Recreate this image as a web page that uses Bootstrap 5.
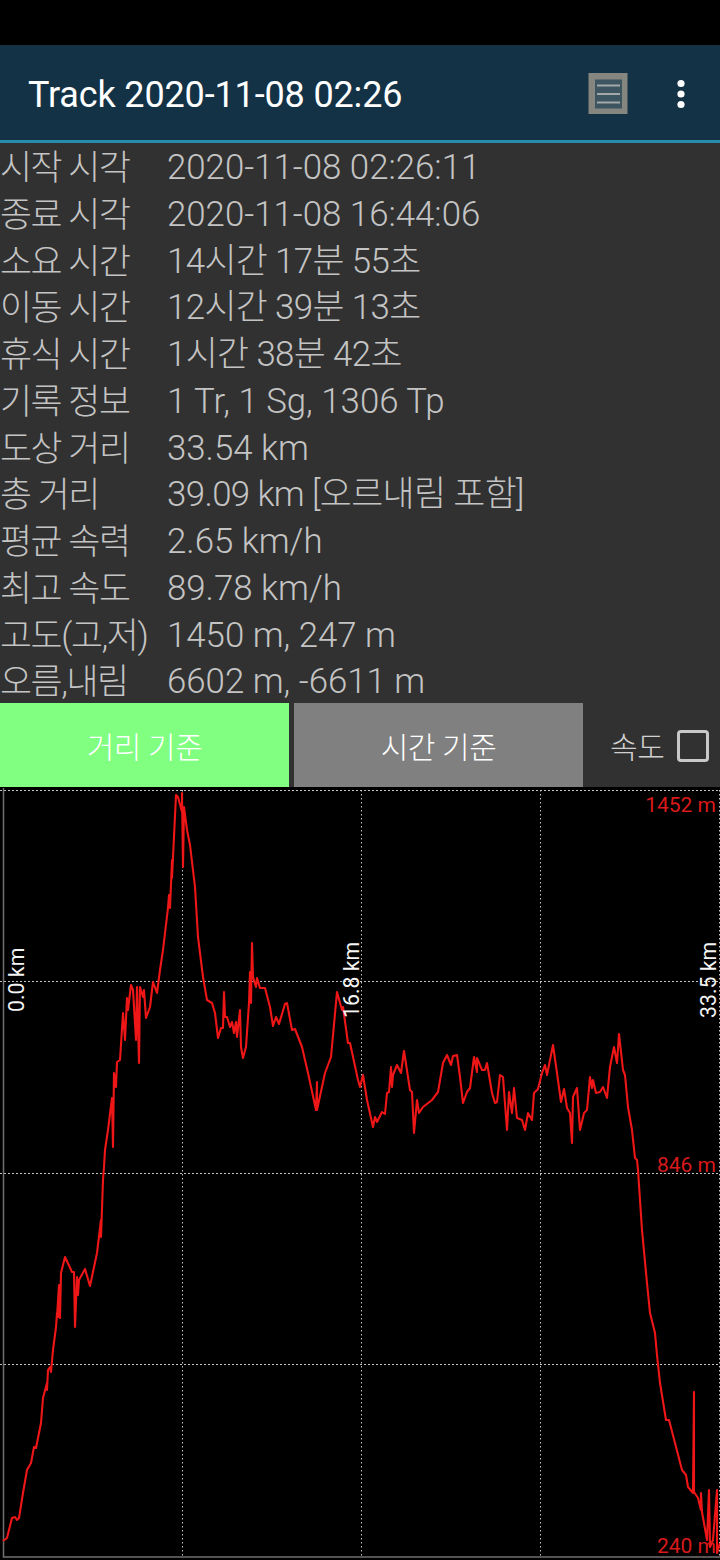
<!doctype html>
<html lang="ko">
<head>
<meta charset="utf-8">
<link href="https://cdn.jsdelivr.net/npm/bootstrap@5.3.0/dist/css/bootstrap.min.css" rel="stylesheet">
<style>
html,body{background:#000;margin:0;height:1560px;overflow:hidden;}
body{font-family:Roboto,"Noto Sans CJK KR",sans-serif;font-weight:300;}
.status-gap{height:45px;background:#000;}
.app-bar{height:98px;background:#143246;border-bottom:3px solid #2a8cac;padding-left:28px;}
.app-title{font-size:36px;line-height:1;color:#fff;font-weight:400;letter-spacing:-.15px;padding-top:4px;}
.doc-icon{width:42px;height:44px;margin-right:32px;}
.kebab{width:40px;margin-right:19px;}
.info-panel{background:#313131;height:560px;color:#c4c4c4;font-size:34.8px;}
.info-line{height:46.75px;line-height:48px;white-space:nowrap;}
.info-key{width:168px;flex:none;letter-spacing:-1.4px;padding-top:1px;}
.info-val{letter-spacing:0;margin-left:-1px;}
.info-mix{letter-spacing:-.6px;}
.tab-row{background:#313131;height:84px;}
.tab-btn{width:289px;height:84px;border:0;border-radius:0;color:#fff;font-size:30px;font-weight:300;padding:5px 0 0;letter-spacing:-.4px;}
.tab-green{background:#80ff80;}
.tab-grey{background:#808080;margin-left:5px;}
.tab-green:hover,.tab-green:active{background:#80ff80 !important;color:#fff !important;}
.tab-grey:hover,.tab-grey:active{background:#808080 !important;color:#fff !important;}
.speed-label{color:#d0d0d0;font-size:30px;margin-left:27px;padding-top:5px;letter-spacing:-.4px;}
.speed-box{width:32px;height:32px;border:3.5px solid #c8c8c8;border-radius:4px;margin-left:13px;margin-top:1px;}
.chart-wrap{height:773px;background:#000;}
.chart-svg{display:block;}
.axis-dist{fill:#f4f4f4;font-size:21.3px;font-family:Roboto,sans-serif;font-weight:400;}
.axis-alt{fill:#d81a1a;font-size:21px;font-family:Roboto,sans-serif;font-weight:400;}
</style>
</head>
<body>
<div class="status-gap"></div>
<div class="app-bar d-flex align-items-center">
  <div class="app-title flex-grow-1">Track 2020-11-08 02:26</div>
  <svg class="doc-icon" viewBox="0 0 42 44" aria-hidden="true">
    <defs><filter id="soft" x="-15%" y="-15%" width="130%" height="130%"><feGaussianBlur stdDeviation=".7"/></filter></defs>
    <g filter="url(#soft)">
      <rect x="1.500" y="2" width="39" height="41" fill="#868680"/>
      <rect x="8" y="8.500" width="27" height="29" fill="#3c5560"/>
      <path d="M10 14.500H33M10 23H33M10 31.500H33" stroke="#a4a8a8" stroke-width="2.200"/>
    </g>
  </svg>
  <svg class="kebab" viewBox="0 0 40 40" aria-hidden="true"><circle cx="20" cy="10.500" r="3.600" fill="#fff"/><circle cx="20" cy="21" r="3.600" fill="#fff"/><circle cx="20" cy="31.500" r="3.600" fill="#fff"/></svg>
</div>
<div class="info-panel">
  <div class="info-line d-flex"><div class="info-key">시작 시각</div><div class="info-val">2020-11-08 02:26:11</div></div>
  <div class="info-line d-flex"><div class="info-key">종료 시각</div><div class="info-val">2020-11-08 16:44:06</div></div>
  <div class="info-line d-flex"><div class="info-key">소요 시간</div><div class="info-val info-mix">14시간 17분 55초</div></div>
  <div class="info-line d-flex"><div class="info-key">이동 시간</div><div class="info-val info-mix">12시간 39분 13초</div></div>
  <div class="info-line d-flex"><div class="info-key">휴식 시간</div><div class="info-val info-mix">1시간 38분 42초</div></div>
  <div class="info-line d-flex"><div class="info-key">기록 정보</div><div class="info-val">1 Tr, 1 Sg, 1306 Tp</div></div>
  <div class="info-line d-flex"><div class="info-key">도상 거리</div><div class="info-val">33.54 km</div></div>
  <div class="info-line d-flex"><div class="info-key">총 거리</div><div class="info-val info-mix">39.09 km [오르내림 포함]</div></div>
  <div class="info-line d-flex"><div class="info-key">평균 속력</div><div class="info-val">2.65 km/h</div></div>
  <div class="info-line d-flex"><div class="info-key">최고 속도</div><div class="info-val">89.78 km/h</div></div>
  <div class="info-line d-flex"><div class="info-key">고도(고,저)</div><div class="info-val">1450 m, 247 m</div></div>
  <div class="info-line d-flex"><div class="info-key">오름,내림</div><div class="info-val">6602 m, -6611 m</div></div>
</div>
<div class="tab-row d-flex align-items-center">
  <button type="button" class="btn tab-btn tab-green">거리 기준</button>
  <button type="button" class="btn tab-btn tab-grey">시간 기준</button>
  <span class="speed-label">속도</span>
  <span class="speed-box d-block"></span>
</div>
<div class="chart-wrap">
<svg class="chart-svg" width="720" height="773" viewBox="0 787 720 773" aria-label="고도 그래프">
  <g stroke="#c4c4c4" stroke-width="1" fill="none">
    <path stroke-dasharray="2 2" d="M0 790.500H720M0 981.500H720M0 1173.500H720M0 1364.500H720"/>
    <path stroke-dasharray="1.500 2.500" d="M182.500 790V1556M361.500 790V1556M540.500 790V1556M719.500 790V1556"/>
  </g>
  <path d="M3.500 788V1557H720" stroke="#707070" stroke-width="1.500" fill="none"/>
  <polyline fill="none" stroke="#ee1616" stroke-width="2.100" stroke-linejoin="round" points="3,1541 7,1538 12,1518 15,1517 17,1520 19,1518 23,1493 27,1470 31,1463 34,1447 36,1448 41,1423 43,1398 47,1383 47,1390 48,1370 50,1367 51,1372 53,1350 56,1327 57,1313 58,1317 59,1285 57,1317 59,1285 60,1318 61,1273 65,1257 72,1272 74,1272 75,1327 77,1277 78,1295 79,1280 85,1269 90,1286 97,1253 101,1220 101,1237 103,1180 104,1167 105,1150 108,1130 112,1098 113,1147 114,1073 116,1087 117,1062 120,1060 123,1013 125,1040 127,998 128,1010 131,985 133,990 136,1040 137,987 139,1063 140,987 143,997 144,990 146,1018 150,1007 153,982 157,993 160,970 163,950 168,908 169,895 170,908 172,860 172,878 176,795 178,797 182,812 182,793 183,867 184,807 187,830 190,845 195,887 198,937 203,977 207,1000 212,1003 215,1013 218,1038 221,1028 223,1028 224,992 225,1017 227,1017 230,1027 232,1022 234,1033 236,1022 237,1037 240,1010 241,1047 243,1058 246,1047 249,1003 250,972 251,1003 252,943 253,977 256,987 257,978 260,988 265,988 270,1007 273,1026 276,1017 279,1024 285,1004 287,1003 292,1030 295,1029 302,1047 308,1073 316,1110 317,1082 317,1110 325,1073 331,1057 337,992 342,1010 343,1007 348,1043 350,1043 358,1080 360,1087 363,1075 367,1100 373,1127 375,1117 377,1122 382,1112 385,1114 387,1093 389,1092 391,1067 392,1087 393,1075 397,1065 401,1073 404,1051 410,1090 412,1092 414,1133 417,1100 419,1113 423,1107 432,1100 438,1092 443,1063 447,1055 451,1065 453,1056 457,1055 460,1077 463,1103 467,1092 470,1088 474,1057 477,1072 477,1058 482,1070 485,1070 487,1063 492,1093 495,1103 497,1102 500,1075 503,1077 507,1130 509,1092 512,1113 514,1088 517,1118 522,1120 525,1130 528,1113 532,1120 534,1093 538,1089 542,1073 545,1065 547,1075 553,1045 557,1073 561,1102 564,1089 567,1108 570,1113 572,1143 573,1097 577,1088 580,1130 584,1113 587,1110 590,1077 592,1088 593,1080 596,1093 600,1092 603,1087 607,1098 610,1067 614,1047 617,1063 619,1034 623,1070 625,1075 628,1107 632,1130 635,1158 637,1160 638,1170 642,1230 647,1283 650,1313 655,1333 657,1355 660,1383 666,1420 669,1420 675,1443 682,1470 686,1475 688,1487 693,1493 694,1392 694,1492 698,1498 701,1510 701,1493 702,1512 707,1540 709,1490 710,1547 713,1540 717,1490 717,1553 720,1543"/>
  <text class="axis-alt" x="716" y="812" text-anchor="end">1452 m</text>
  <text class="axis-alt" x="716" y="1172" text-anchor="end">846 m</text>
  <text class="axis-alt" x="716" y="1553" text-anchor="end">240 m</text>
  <text class="axis-dist" transform="translate(24 1012) rotate(-90)">0.0 km</text>
  <text class="axis-dist" transform="translate(359 1018) rotate(-90)">16.8 km</text>
  <text class="axis-dist" transform="translate(715.500 1018) rotate(-90)">33.5 km</text>
</svg>
</div>
</body>
</html>
